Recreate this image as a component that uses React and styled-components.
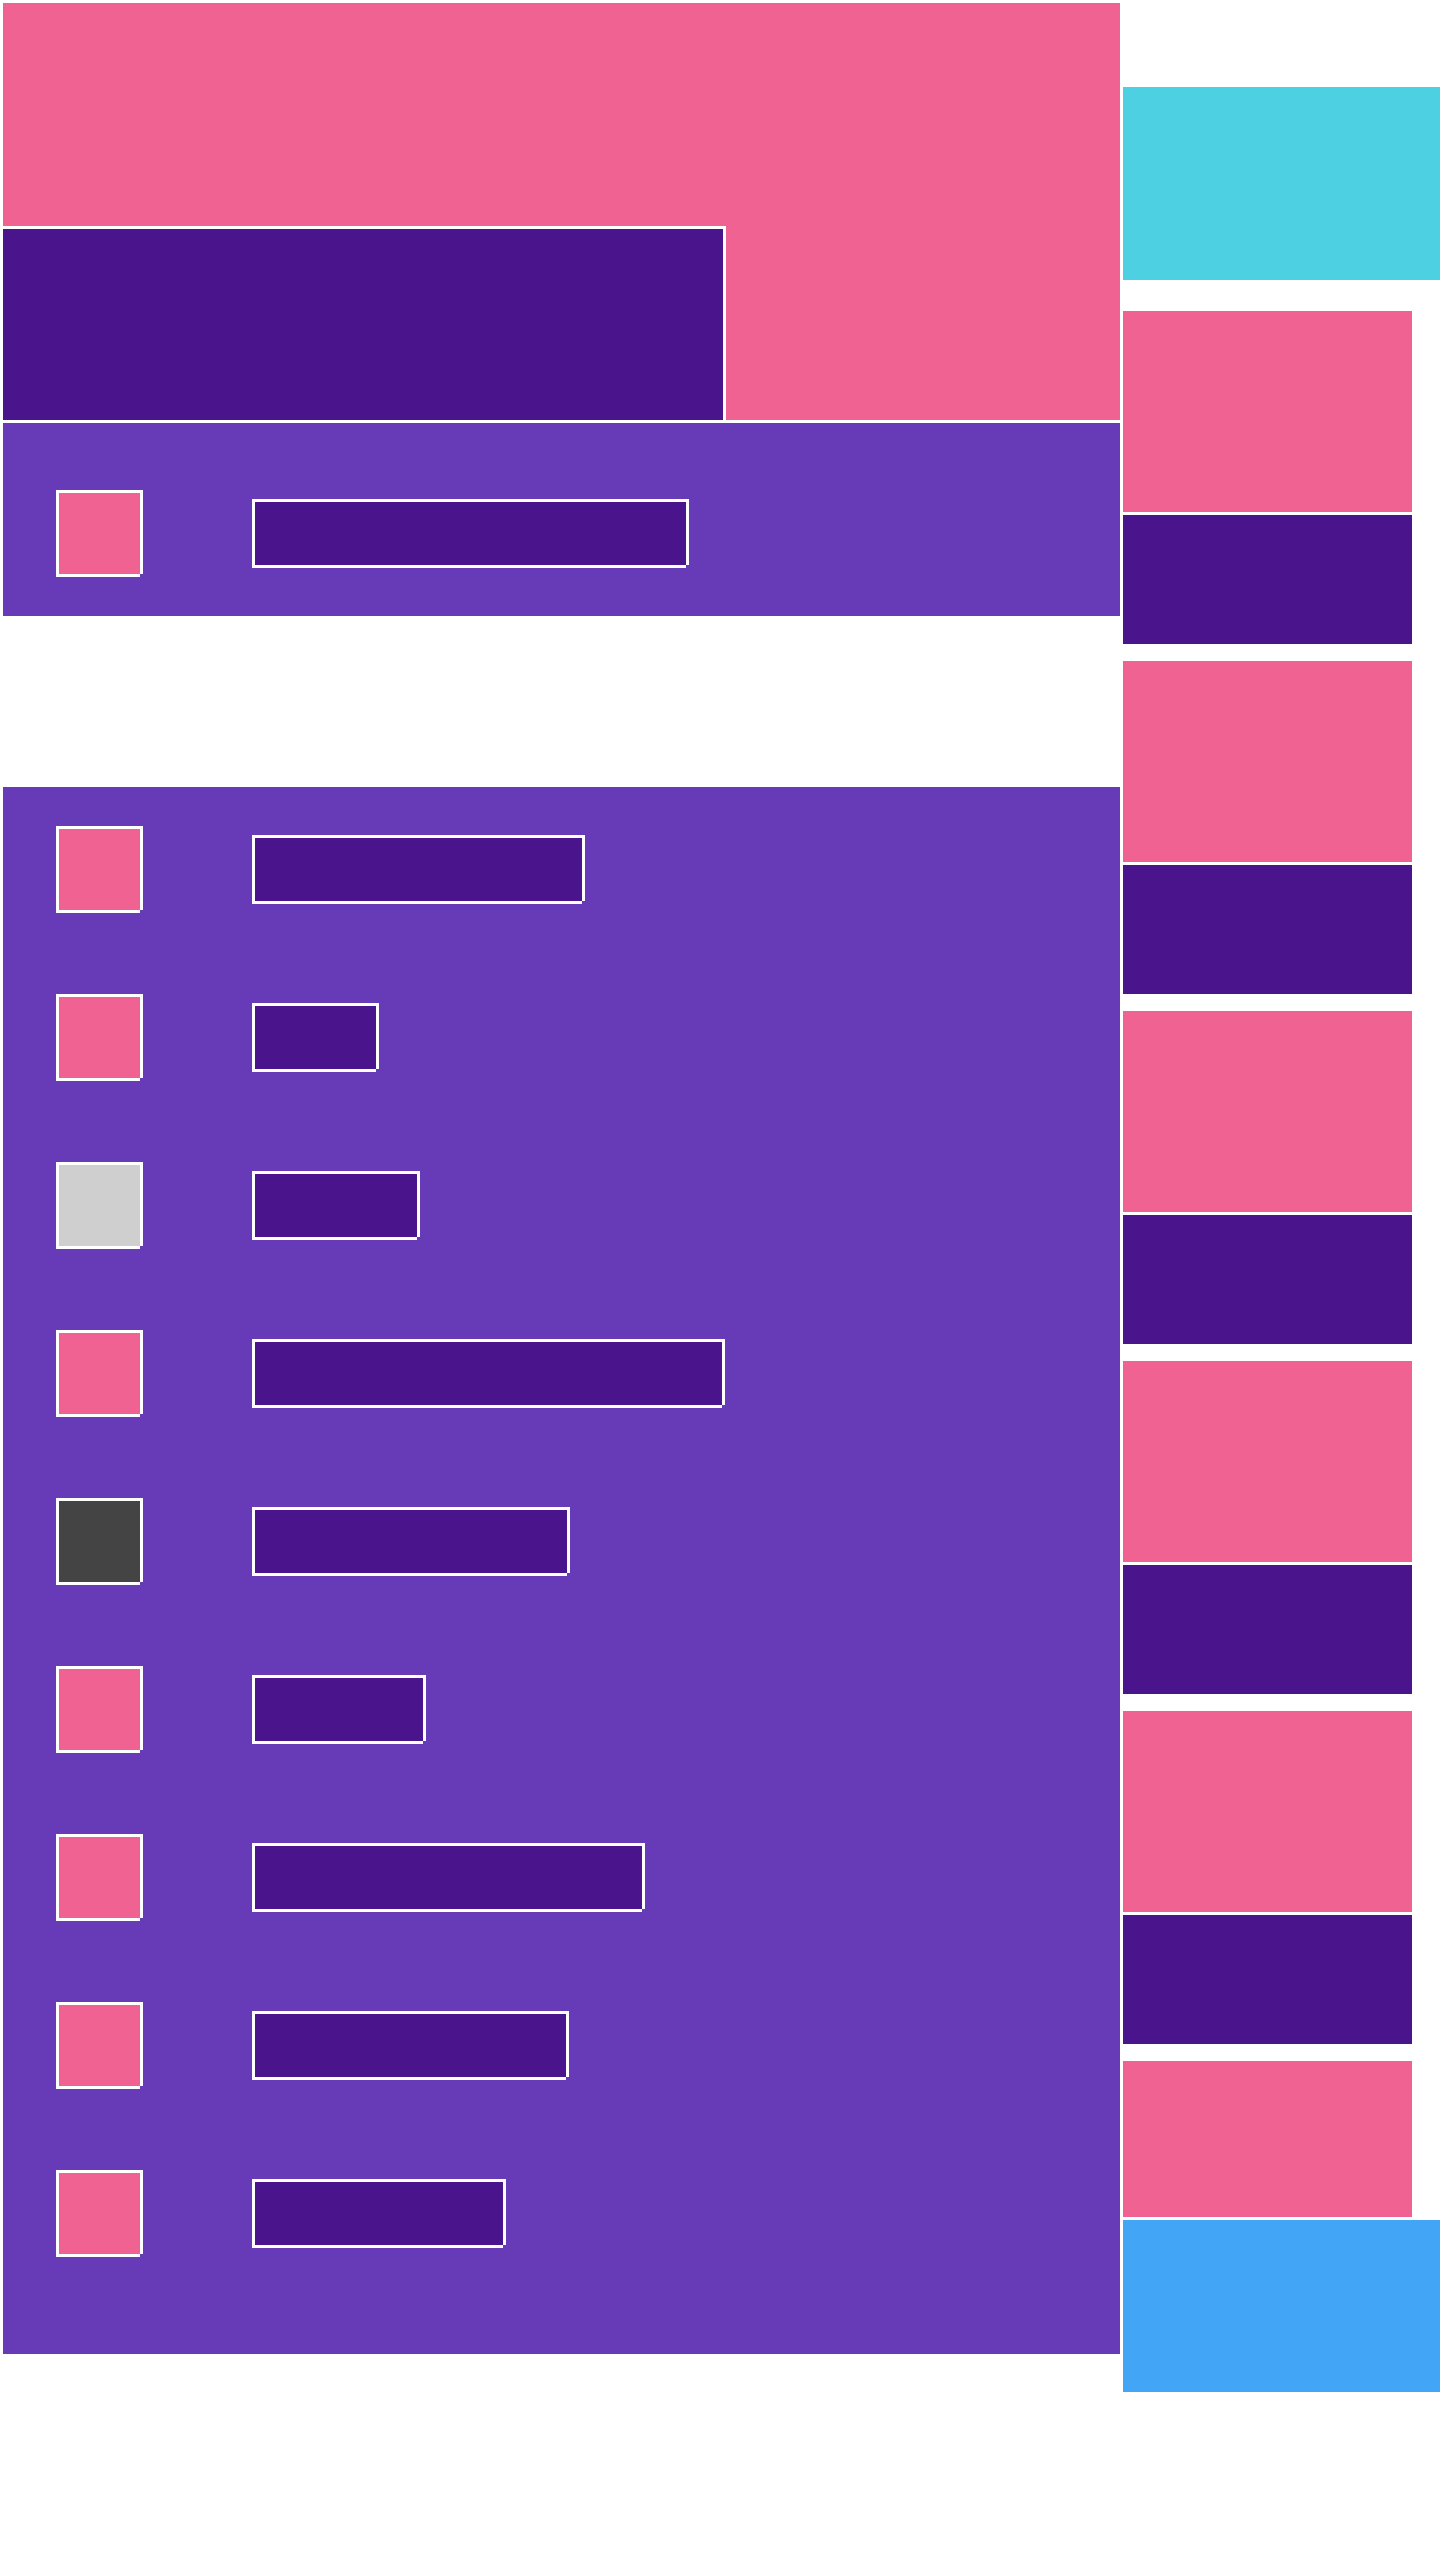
import styled, { createGlobalStyle } from "styled-components";

const PINK = "#F06292";
const DEEP = "#4A148C";
const PURPLE = "#673AB7";

// bar widths for each list row (outer px)
const rows = [
  { color: PINK, width: 333 },
  { color: PINK, width: 127 },
  { color: "#CFCFCF", width: 168 },
  { color: PINK, width: 473 },
  { color: "#444444", width: 318 },
  { color: PINK, width: 174 },
  { color: PINK, width: 393 },
  { color: PINK, width: 317 },
  { color: PINK, width: 254 },
];

const App = () => {
  return (
    <>
      <GlobalStyle />
      <Page>
        {/* MAIN COLUMN */}
        <Main>
          <Header>
            <HeaderInset />
          </Header>
          <Bar>
            <Row>
              <Swatch $color={PINK} />
              <Label $width="437px" />
            </Row>
          </Bar>
          <Panel>
            {rows.map((r, i) => (
              <Row key={i}>
                <Swatch $color={r.color} />
                <Label $width={`${r.width}px`} />
              </Row>
            ))}
          </Panel>
        </Main>

        {/* SIDE COLUMN */}
        <Side>
          <Teaser />
          <Cards>
            {[0, 1, 2, 3, 4].map((i) => (
              <Card key={i}>
                <CardTop />
                <CardBottom />
              </Card>
            ))}
            <Card>
              <CardTop $height="156px" />
            </Card>
          </Cards>
          <Footer />
        </Side>
      </Page>
    </>
  );
};

const GlobalStyle = createGlobalStyle`
  html, body {
    margin: 0;
    padding: 0;
    background: #ffffff;
    font-family: "Liberation Sans", Arial, sans-serif;
  }
`;

const Page = styled.div`
  display: flex;
  align-items: flex-start;
  width: 1440px;
`;

const Main = styled.div`
  display: flex;
  flex-direction: column;
  width: 1117px;
  margin: 3px 0 0 3px;
`;

const Header = styled.div`
  display: flex;
  align-items: flex-end;
  height: 417px;
  background-color: ${PINK};
`;

const HeaderInset = styled.div`
  width: 720px;
  height: 191px;
  background-color: ${DEEP};
  border-top: 3px solid #ffffff;
  border-right: 3px solid #ffffff;
`;

const Bar = styled.div`
  background-color: ${PURPLE};
  border-top: 3px solid #ffffff;
  padding: 67px 0 39px 53px;
  margin-bottom: 171px;
`;

const Panel = styled.div`
  display: flex;
  flex-direction: column;
  gap: 81px;
  background-color: ${PURPLE};
  padding: 39px 0 97px 53px;
`;

const Row = styled.div`
  display: flex;
  align-items: center;
  gap: 109px;
  height: 87px;
`;

const notch = `
  clip-path: polygon(
    0 0,
    100% 0,
    100% calc(100% - 3px),
    calc(100% - 3px) calc(100% - 3px),
    calc(100% - 3px) 100%,
    0 100%
  );
`;

const Swatch = styled.div`
  box-sizing: border-box;
  width: 87px;
  height: 87px;
  background-color: ${(props) => props.$color};
  border: 3px solid #ffffff;
  ${notch}
`;

const Label = styled.div`
  box-sizing: border-box;
  width: ${(props) => props.$width};
  height: 69px;
  background-color: ${DEEP};
  border: 3px solid #ffffff;
  ${notch}
`;

const Side = styled.div`
  display: flex;
  flex-direction: column;
  width: 317px;
  margin-left: 3px;
  padding-top: 87px;
`;

const Teaser = styled.div`
  height: 193px;
  background-color: #4dd0e1;
  margin-bottom: 31px;
`;

const Cards = styled.div`
  display: flex;
  flex-direction: column;
  gap: 17px;
  width: 289px;
`;

const Card = styled.div`
  display: flex;
  flex-direction: column;
`;

const CardTop = styled.div`
  height: ${(props) => props.$height || "201px"};
  background-color: ${PINK};
`;

const CardBottom = styled.div`
  height: 129px;
  background-color: ${DEEP};
  border-top: 3px solid #ffffff;
`;

const Footer = styled.div`
  height: 172px;
  background-color: #42a5f5;
  border-top: 3px solid #ffffff;
`;

export default App;
